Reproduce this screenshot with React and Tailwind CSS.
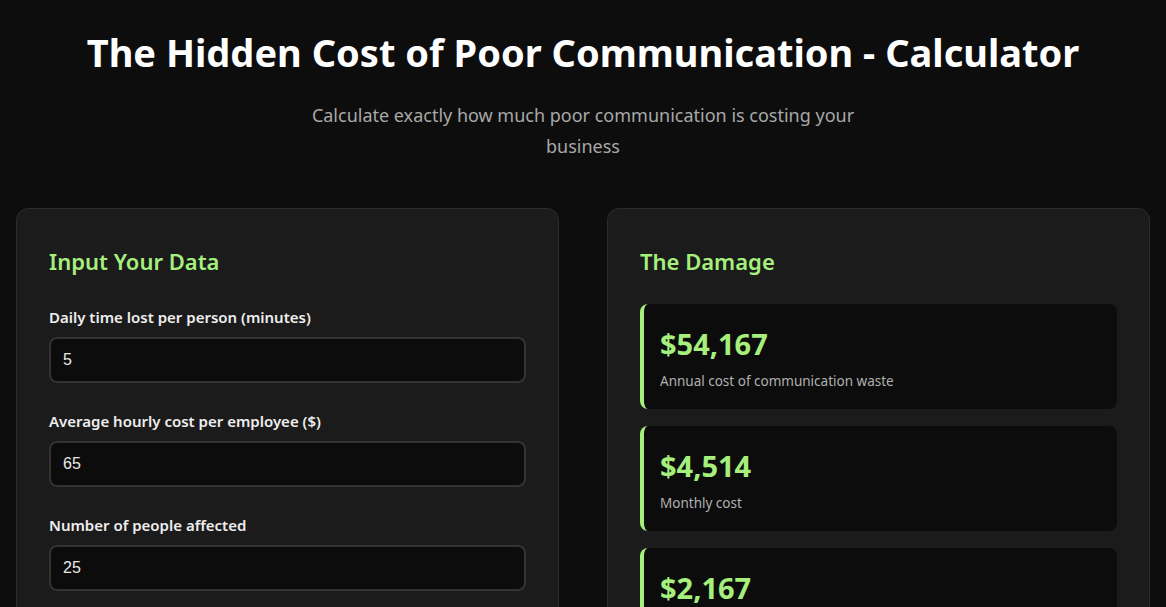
import React from "react";

const inputs = [
  { label: "Daily time lost per person (minutes)", value: "5" },
  { label: "Average hourly cost per employee ($)", value: "65" },
  { label: "Number of people affected", value: "25" },
];

const results = [
  { amount: "$54,167", desc: "Annual cost of communication waste" },
  { amount: "$4,514", desc: "Monthly cost" },
  { amount: "$2,167", desc: "Cost per person per year" },
];

export default function App() {
  return (
    <div
      className="min-h-screen bg-[#0d0d0d] text-white px-4"
      style={{ fontFamily: '"Noto Sans", "Open Sans", sans-serif' }}
    >
      <div className="pt-[28px] text-center">
        <h1 className="text-[38px] font-bold leading-[48px] text-white">
          The Hidden Cost of Poor Communication - Calculator
        </h1>
        <p className="mx-auto mt-[24px] max-w-[600px] text-[18px] leading-[31px] text-[#a8a8a8]">
          Calculate exactly how much poor communication is costing your business
        </p>
      </div>

      <div className="mt-[46px] grid grid-cols-2 gap-12">
        <div className="rounded-xl border border-[#2c2c2c] bg-[#1b1b1b] px-8 pt-[36px] pb-8">
          <h2 className="text-[22px] font-semibold leading-[32px] text-[#a6ef7d] mb-[30px]">
            Input Your Data
          </h2>
          <div className="flex flex-col gap-[28px]">
            {inputs.map((f) => (
              <div key={f.label} className="flex flex-col">
                <label className="text-[15px] font-semibold leading-[20px] text-[#eeeeee] mb-[10px]">
                  {f.label}
                </label>
                <div
                  className="h-[46px] rounded-lg border-2 border-[#333333] bg-[#0c0c0c] px-[12px] flex items-center text-[16px] text-[#e8e8e8]"
                  style={{ fontFamily: '"Liberation Sans", Arial, sans-serif' }}
                >
                  {f.value}
                </div>
              </div>
            ))}
          </div>
        </div>

        <div className="rounded-xl border border-[#2c2c2c] bg-[#1b1b1b] px-8 pt-[36px] pb-8">
          <h2 className="text-[22px] font-semibold leading-[32px] text-[#a6ef7d] mb-[27px]">
            The Damage
          </h2>
          <div className="flex flex-col gap-[17px]">
            {results.map((r) => (
              <div
                key={r.amount}
                className="h-[105px] rounded-lg border-l-4 border-[#a6ef7d] bg-[#0c0c0c] pl-4 pt-[22px]"
              >
                <div className="text-[29px] font-bold leading-[36px] text-[#a6ef7d]">
                  {r.amount}
                </div>
                <div className="mt-[10px] text-[13.5px] leading-[18px] text-[#b0b0b0]">
                  {r.desc}
                </div>
              </div>
            ))}
          </div>
        </div>
      </div>
    </div>
  );
}
